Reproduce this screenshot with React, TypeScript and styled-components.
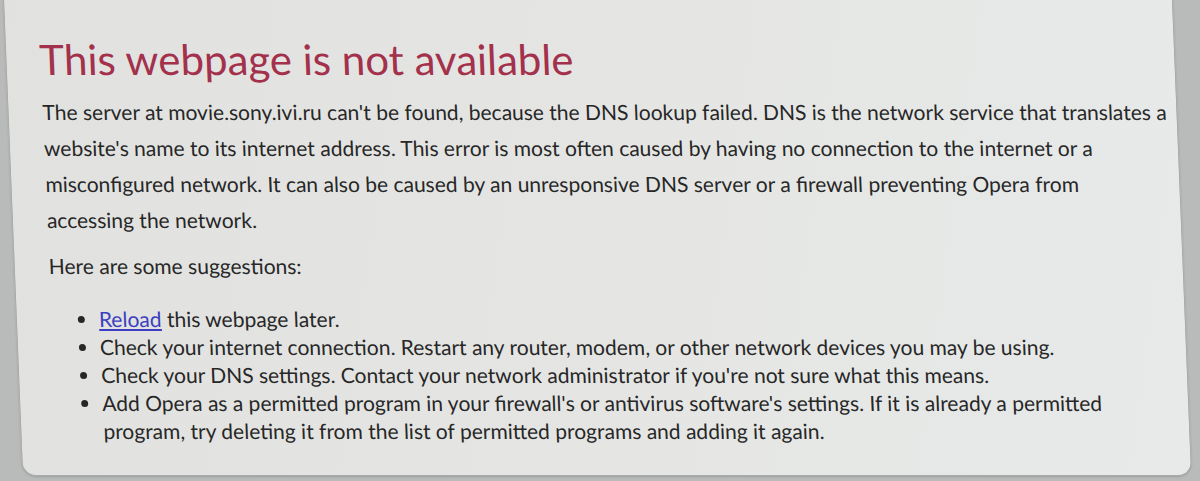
import styled, { createGlobalStyle } from 'styled-components';

const GlobalStyle = createGlobalStyle`
  html, body {
    margin: 0;
    padding: 0;
    background: #b9baba;
    overflow: hidden;
  }
  body {
    width: 1200px;
    height: 481px;
  }
`;

export default function App() {
  return (
    <>
      <GlobalStyle />
      <Page>
        <Card>
          <Title>This webpage is not available</Title>
          <Message>
            The server at movie.sony.ivi.ru can't be found, because the DNS lookup failed. DNS is the
            network service that translates a<br />
            website's name to its internet address. This error is most often caused by having no
            connection to the internet or a<br />
            misconfigured network. It can also be caused by an unresponsive DNS server or a firewall
            preventing Opera from<br />
            accessing the network.
          </Message>
          <Lead>Here are some suggestions:</Lead>
          <Suggestions>
            <li>
              <ReloadLink href="#">Reload</ReloadLink> this webpage later.
            </li>
            <li>
              Check your internet connection. Restart any router, modem, or other network devices you
              may be using.
            </li>
            <li>
              Check your DNS settings. Contact your network administrator if you're not sure what this
              means.
            </li>
            <li>
              Add Opera as a permitted program in your firewall's or antivirus software's settings. If it
              is already a permitted
              <br />
              program, try deleting it from the list of permitted programs and adding it again.
            </li>
          </Suggestions>
        </Card>
      </Page>
    </>
  );
}

const Page = styled.div`
  width: 1200px;
  height: 481px;
  padding-left: 3px;
  box-sizing: border-box;
  font-family: Lato, 'Liberation Sans', sans-serif;
`;

const Card = styled.div`
  width: 1170px;
  height: 476px;
  box-sizing: border-box;
  padding: 33px 10px 0 34px;
  background: linear-gradient(100deg, #e1e2e0 0%, #e5e6e4 55%, #e7eae9 100%);
  border: 1px solid #a9aaa9;
  border-top: none;
  border-radius: 0 0 14px 14px;
  transform: skewX(2.3deg);
  transform-origin: 0 0;
  box-shadow: 0 1px 2px rgba(0, 0, 0, 0.15);
`;

const Title = styled.h1`
  margin: 0 0 0 -1px;
  font-size: 42px;
  font-weight: 400;
  line-height: 52px;
  color: #a3314c;
`;

const Message = styled.p`
  margin: 9px 0 0;
  font-size: 21px;
  line-height: 36px;
  color: #272727;
  white-space: nowrap;
`;

const Lead = styled.p`
  margin: 10px 0 0;
  font-size: 21px;
  line-height: 36px;
  color: #272727;
`;

const Suggestions = styled.ul`
  margin: 21px 0 0;
  padding-left: 48px;
  font-size: 21px;
  line-height: 28px;
  color: #272727;
  white-space: nowrap;
`;

const ReloadLink = styled.a`
  color: #3b3fc0;
  text-decoration: underline;
`;
